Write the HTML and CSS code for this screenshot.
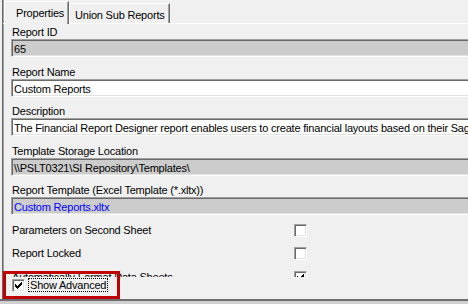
FILE: index.html
```html
<!DOCTYPE html>
<html>

<head>
  <title>Report Properties</title>
  <link rel="stylesheet" href="styles.css">
</head>

<body>
  <div class="window">
    <div class="frame">
      <div class="tabs">
        <div class="tab selected">Properties</div>
        <div class="tab">Union Sub Reports</div>
      </div>
      <div class="page">
        <div class="fields">
          <div class="group">
            <div class="label">Report ID</div>
            <div class="field readonly">65</div>
          </div>
          <div class="group">
            <div class="label">Report Name</div>
            <div class="field">Custom Reports</div>
          </div>
          <div class="group">
            <div class="label">Description</div>
            <div class="field">The Financial Report Designer report enables users to create financial layouts based on their Sage 300 ERP data.</div>
          </div>
          <div class="group">
            <div class="label">Template Storage Location</div>
            <div class="field readonly">\\PSLT0321\SI Repository\Templates\</div>
          </div>
          <div class="group">
            <div class="label">Report Template (Excel Template (*.xltx))</div>
            <div class="field readonly link">Custom Reports.xltx</div>
          </div>
          <div class="checks">
            <div class="label">Parameters on Second Sheet</div>
            <div class="checkbox"></div>
            <div class="label">Report Locked</div>
            <div class="checkbox"></div>
            <div class="label">Automatically Format Data Sheets</div>
            <div class="checkbox">
              <svg width="7" height="7" viewBox="0 0 7 7" shape-rendering="crispEdges"><path d="M6 0h1v1h-1z M5 1h2v1h-2z M0 2h1v1h-1z M4 2h3v1h-3z M0 3h2v1h-2z M3 3h3v1h-3z M0 4h5v1h-5z M1 5h3v1h-3z M2 6h1v1h-1z" fill="#000"/></svg>
            </div>
          </div>
        </div>
        <div class="footer">
          <div class="checkbox">
            <svg width="7" height="7" viewBox="0 0 7 7" shape-rendering="crispEdges"><path d="M6 0h1v1h-1z M5 1h2v1h-2z M0 2h1v1h-1z M4 2h3v1h-3z M0 3h2v1h-2z M3 3h3v1h-3z M0 4h5v1h-5z M1 5h3v1h-3z M2 6h1v1h-1z" fill="#000"/></svg>
          </div>
          <span class="focus">Show Advanced</span>
        </div>
      </div>
    </div>
    <div class="base"></div>
    <div class="highlight"></div>
  </div>
</body>

</html>
```

FILE: styles.css
```css
body {
  margin: 0;
  background-color: #F0F0F0;
  font-family: "Liberation Sans", Arial, sans-serif;
  font-size: 11px;
  letter-spacing: -0.2px;
  color: #000;
  overflow: hidden;
}

.window {
  position: relative;
  width: 468px;
  height: 304px;
  overflow: hidden;
}

.frame {
  height: 299px;
  margin-left: 2px;
  border-left: 1px solid #696969;
  box-shadow: inset 1px 0 #A0A0A0;
}

.tabs {
  display: flex;
  align-items: flex-end;
  height: 23px;
  padding-left: 1px;
}

.tab {
  box-sizing: border-box;
  width: 101px;
  height: 20px;
  padding: 5px 0 0 5px;
  line-height: 13px;
  white-space: nowrap;
  background-color: #F0F0F0;
  border-top: 1px solid #FFF;
  border-left: 1px solid #FFF;
  border-right: 1px solid #696969;
  box-shadow: inset -1px 0 #A0A0A0;
}

.tab.selected {
  position: relative;
  z-index: 1;
  width: 65px;
  height: 23px;
  margin-bottom: -1px;
  padding-left: 11px;
}

.page {
  width: 600px;
  border-top: 1px solid #FFF;
}

.fields {
  box-sizing: border-box;
  height: 253px;
  padding: 2px 0 0 8px;
  overflow: hidden;
}

.group {
  margin-bottom: 8.5px;
}

.label {
  height: 13px;
  line-height: 13px;
  padding-left: 1px;
  white-space: nowrap;
}

.field {
  box-sizing: border-box;
  width: 520px;
  height: 18px;
  padding: 1px 0 0 2px;
  line-height: 16px;
  white-space: nowrap;
  overflow: hidden;
  background-color: #FFF;
  border: 1px solid;
  border-color: #A0A0A0 #FFF #FFF #A0A0A0;
  box-shadow: inset 1px 1px #696969, inset -1px -1px #E3E3E3;
}

.field.readonly {
  background-color: #CCCCCC;
}

.field.link {
  color: #0000FF;
}

.checks {
  display: grid;
  grid-template-columns: 283px 13px;
  row-gap: 10.5px;
}

.checkbox {
  box-sizing: border-box;
  width: 13px;
  height: 13px;
  padding: 2px;
  background-color: #FFF;
  border: 1px solid;
  border-color: #A0A0A0 #FFF #FFF #A0A0A0;
  box-shadow: inset 1px 1px #696969, inset -1px -1px #E3E3E3;
}

.checkbox svg {
  display: block;
}

.footer {
  display: flex;
  align-items: flex-start;
  height: 22px;
  box-sizing: border-box;
  padding: 1px 0 0 9px;
}

.footer .checkbox {
  margin-top: 1px;
}

.focus {
  margin-left: 3px;
  padding: 0 1px;
  line-height: 12px;
  border: 1px dotted #000;
}

.base {
  height: 5px;
  box-sizing: border-box;
  border-top: 2px solid #6E6E6E;
  background-color: #D0D0D0;
}

.highlight {
  position: absolute;
  left: 3px;
  top: 271px;
  width: 117px;
  height: 28px;
  box-sizing: border-box;
  border: 3px solid #C00000;
}
```
